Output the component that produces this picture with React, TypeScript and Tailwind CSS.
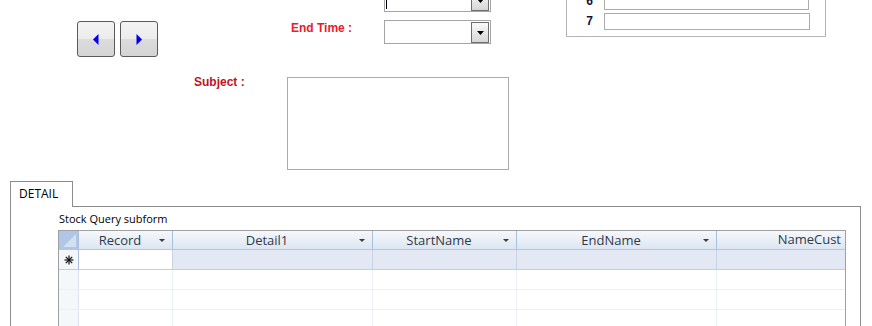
import React from "react";

const columns = [
  { name: "Record", width: "w-[94px]", arrow: true, align: "center" },
  { name: "Detail1", width: "w-[200px]", arrow: true, align: "center" },
  { name: "StartName", width: "w-[144px]", arrow: true, align: "center" },
  { name: "EndName", width: "w-[200px]", arrow: true, align: "center" },
  { name: "NameCust", width: "flex-1", arrow: false, align: "right" },
];

function NavButton({ dir }: { dir: "left" | "right" }) {
  return (
    <button className="w-[38px] h-[36px] border border-[#5a5a5a] rounded-[3px] bg-[linear-gradient(to_bottom,#f3f3f3_0%,#ececec_50%,#dcdcdc_50%,#d4d4d4_100%)] flex items-center justify-center">
      <svg width="6" height="11" viewBox="0 0 6 11">
        {dir === "left" ? (
          <polygon points="5.5,0 0,5.5 5.5,11" fill="#0000e6" />
        ) : (
          <polygon points="0.5,0 6,5.5 0.5,11" fill="#0000e6" />
        )}
      </svg>
    </button>
  );
}

function Combo({ caret }: { caret?: boolean }) {
  return (
    <div className="w-[107px] h-[24px] border border-[#a4a4aa] bg-white flex justify-between">
      {caret ? <div className="ml-[1px] mt-[4px] h-[16px] w-px bg-black" /> : <div />}
      <div className="mt-px mr-px w-[18px] h-[21px] border border-[#6e6e6e] bg-[linear-gradient(to_bottom,#fafafa,#d6d6d6)] flex items-center justify-center">
        <svg width="7" height="4" viewBox="0 0 7 4">
          <polygon points="0,0 7,0 3.5,4" fill="#000" />
        </svg>
      </div>
    </div>
  );
}

function HeaderArrow() {
  return (
    <svg width="6" height="3" viewBox="0 0 6 3" className="shrink-0">
      <polygon points="0,0 6,0 3,3" fill="#3a3a3a" />
    </svg>
  );
}

function Asterisk() {
  return (
    <svg width="10" height="10" viewBox="0 0 10 10">
      <g stroke="#111" strokeWidth="1.2">
        <line x1="5" y1="0.5" x2="5" y2="9.5" />
        <line x1="0.5" y1="5" x2="9.5" y2="5" />
        <line x1="1.8" y1="1.8" x2="8.2" y2="8.2" />
        <line x1="8.2" y1="1.8" x2="1.8" y2="8.2" />
      </g>
    </svg>
  );
}

export default function App() {
  return (
    <div className="w-[872px] h-[326px] bg-white overflow-hidden font-['Liberation_Sans',Arial,sans-serif]">
      {/* form header area */}
      <div className="flex h-[181px]">
        <div className="w-[566px] flex flex-col">
          <div className="flex h-[77px]">
            <div className="ml-[77px] mt-[21px] flex gap-[5px] self-start">
              <NavButton dir="left" />
              <NavButton dir="right" />
            </div>
            <div className="ml-[133px] w-[93px] mt-[19px] text-[12px] font-bold text-[#e8202c]">End Time :</div>
            <div className="-mt-[12px] flex flex-col gap-[8px]">
              <Combo caret />
              <Combo />
            </div>
          </div>
          <div className="flex">
            <div className="ml-[194px] w-[93px] -mt-[4px] text-[12px] font-bold text-[#c3121e]">Subject :</div>
            <div className="w-[222px] h-[93px] border border-[#ababab]" />
          </div>
        </div>

        <div className="-mt-[30px] h-[67px] w-[260px] border border-[#b4b4b4] flex flex-col justify-end pb-[6px] gap-[2px] self-start">
          {[
            { n: "6", w: "w-[205px]" },
            { n: "7", w: "w-[206px]" },
          ].map((r) => (
            <div key={r.n} className="flex items-center">
              <div className="w-[26px] text-right text-[12px] font-bold text-[#101038]">{r.n}</div>
              <div className={`ml-[11px] h-[17px] border border-[#acacac] ${r.w}`} />
            </div>
          ))}
        </div>
      </div>

      {/* tab control */}
      <div className="ml-[10px] w-[851px] font-['Open_Sans',sans-serif]">
        <div className="flex">
          <div className="w-[63px] h-[26px] border-l border-t border-r border-[#8c8c8c] pl-[8px] pt-[3px] text-[12px] text-black">
            DETAIL
          </div>
          <div className="flex-1 h-[26px] border-b border-[#8c8c8c]" />
        </div>
        <div className="h-[140px] border-l border-r border-[#8c8c8c] pl-[47px]">
          <div className="pt-[4px] pl-[1px] h-[23px] text-[11px] leading-[15px] text-black">Stock Query subform</div>

          <div className="w-[788px] border-t border-l border-r border-[#a0a0a0]">
            {/* header */}
            <div className="flex h-[19px] border-b border-[#b6c6dc]">
              <div className="w-[20px] border-r border-[#a6bddb] bg-[#afc6e6] relative overflow-hidden">
                <svg width="20" height="19" viewBox="0 0 20 19" className="absolute inset-0">
                  <polygon points="17,3 17,16 4,16" fill="#d3e0f2" />
                </svg>
              </div>
              {columns.map((c) => (
                <div
                  key={c.name}
                  className={`${c.width} flex items-center border-r border-[#a8bfdc] last:border-r-0 bg-[linear-gradient(to_bottom,#f5f8fc_0%,#e9eff7_50%,#dce5f1_100%)] text-[13px] text-[#2e3a4c] ${c.align === "right" ? "justify-end pr-[4px]" : "pl-[2px] pr-[7px]"}`}
                >
                  {c.align === "right" ? (
                    <span>{c.name}</span>
                  ) : (
                    <>
                      <span className="flex-1 text-center leading-[18px]">{c.name}</span>
                      {c.arrow && <HeaderArrow />}
                    </>
                  )}
                </div>
              ))}
            </div>

            {/* new record row */}
            <div className="flex h-[20px] border-b border-[#c2cee0]">
              <div className="w-[20px] border-r border-[#a6bddb] bg-[#f3f6fb] flex items-center justify-center">
                <Asterisk />
              </div>
              {columns.map((c, i) => (
                <div
                  key={c.name}
                  className={`${c.width} border-r border-[#c8d3e4] last:border-r-0 ${i === 0 ? "bg-white" : "bg-[#e3e9f4]"}`}
                />
              ))}
            </div>

            {/* empty rows */}
            {[0, 1, 2].map((r) => (
              <div key={r} className="flex h-[20px] border-b border-[#eceff5]">
                <div className="w-[20px] border-r border-[#dde3ee] bg-[#f5f7fb]" />
                {columns.map((c) => (
                  <div key={c.name} className={`${c.width} border-r border-[#eceff5] last:border-r-0`} />
                ))}
              </div>
            ))}
          </div>
        </div>
      </div>
    </div>
  );
}
